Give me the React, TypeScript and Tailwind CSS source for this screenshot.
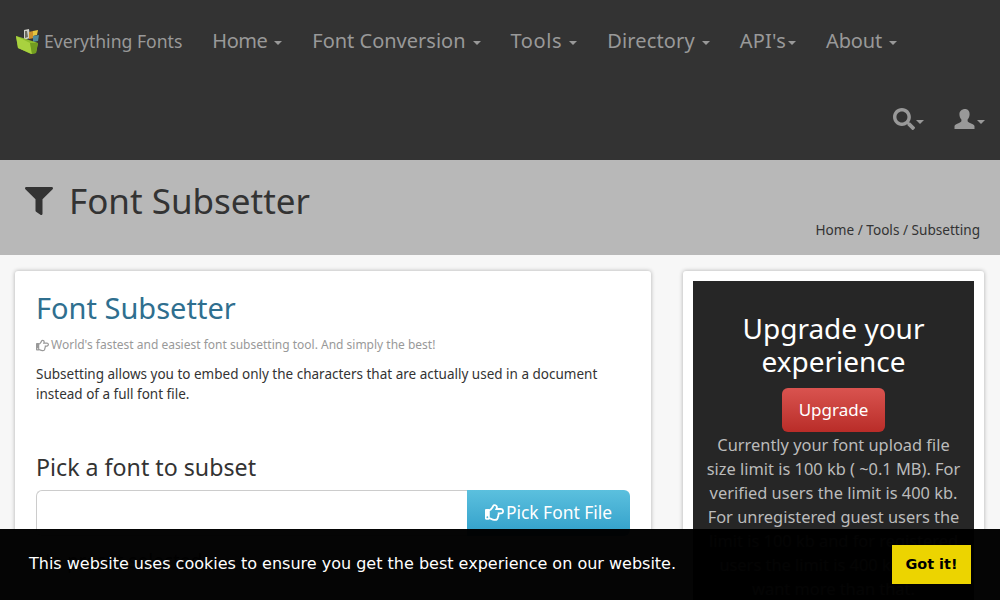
import { FaFilter, FaRegHandPointRight, FaSearch } from 'react-icons/fa'

const sans = "font-['Noto_Sans','Open_Sans',sans-serif]"

const navItems = [
  { label: 'Home', tracking: 'tracking-[-0.5px]' },
  { label: 'Font Conversion', tracking: '' },
  { label: 'Tools', tracking: 'tracking-[0.6px]' },
  { label: 'Directory', tracking: 'tracking-[0.15px]' },
  { label: "API's", tracking: 'tracking-[0.2px]' },
  { label: 'About', tracking: 'tracking-[-0.1px]' },
]

function Caret({ className = '' }: { className?: string }) {
  return (
    <span
      className={`inline-block h-0 w-0 border-x-4 border-t-4 border-x-transparent border-t-[#999] align-middle ${className}`}
    />
  )
}

function Logo() {
  return (
    <svg width="25" height="26" viewBox="0 0 25 26" className="shrink-0">
      <path d="M9 2l5-1 1 9-6 2z" fill="#cfcfc8" />
      <path d="M10 3l2 0 1 6-3 1z" fill="#6b6b60" />
      <path d="M14 4l4-1 1 7-5 1z" fill="#c98f2b" />
      <path d="M18 3l5-1-1 5-4 1z" fill="#e3c53f" />
      <path d="M18 8l6-1-1 6-5 1z" fill="#4f8a9c" />
      <path d="M1 8l7 2 15 5-2 10-5 1L3 20z" fill="#8fbd2d" />
      <path d="M1 8l14 7 2 11-14-6z" fill="#a9d23f" />
      <path d="M17 26l-2-11 8 0-2 10z" fill="#729d20" />
    </svg>
  )
}

function UserIcon() {
  return (
    <svg width="22" height="22" viewBox="0 0 22 22" fill="#999">
      <path d="M11 1c3 0 4.600 2.200 4.600 5.200 0 2.100-.8 4-2 5.200v1.700c0 .9 1 1.300 2.400 1.900 2.500 1 4.500 1.600 4.500 3.300V21H.5v-2.700c0-1.700 2-2.300 4.500-3.300 1.400-.6 2.400-1 2.400-1.900v-1.700c-1.200-1.200-2-3.100-2-5.200C5.400 3.200 8 1 11 1z" />
    </svg>
  )
}

export default function App() {
  return (
    <div className={`relative h-[600px] w-[1000px] overflow-hidden bg-[#f7f7f7] ${sans}`}>
      <header className="h-[160px] bg-[#333] text-[#999]">
        <div className="flex h-[82px] items-center pl-[15px]">
          <Logo />
          <span className="ml-[4px] text-[17.6px]">Everything Fonts</span>
          <nav className="ml-[30px] flex gap-[30px]">
            {navItems.map((item) => (
              <span key={item.label} className={`flex items-center text-[20px] ${item.tracking}`}>
                {item.label}
                <Caret className={item.label === "API's" ? 'ml-[2px] mt-[3px]' : 'ml-[7px] mt-[3px]'} />
              </span>
            ))}
          </nav>
        </div>
        <div className="flex h-[78px] items-start justify-end pr-[15px] pt-[26px]">
          <span className="flex items-center">
            <FaSearch className="text-[22px]" />
            <Caret className="ml-[1px] mt-[5px]" />
          </span>
          <span className="ml-[30px] flex items-center">
            <UserIcon />
            <Caret className="ml-[1px] mt-[5px]" />
          </span>
        </div>
      </header>

      <div className="relative flex h-[95px] bg-[#b8b8b8] pl-[25px] pt-[19px] text-[#333]">
        <FaFilter className="mt-[8px] text-[28px]" />
        <h1 className="ml-[16px] text-[35px] leading-[44px]">Font Subsetter</h1>
        <div className="absolute bottom-[15px] right-[20px] text-[13.6px] leading-[20px]">
          Home / Tools / Subsetting
        </div>
      </div>

      <main className="flex items-start px-[15px] pt-[16px]">
        <section className="w-[636px] shrink-0 rounded-[3px] bg-white px-[21px] pt-[18px] shadow-[0_0_4px_rgba(0,0,0,0.3)]">
          <h2 className="text-[29px] leading-[38px] text-[#2f6f8f]">Font Subsetter</h2>
          <p className="mt-[9px] flex items-center gap-[2px] text-[12px] leading-[18px] text-[#999]">
            <FaRegHandPointRight className="text-[13px]" />
            World's fastest and easiest font subsetting tool. And simply the best!
          </p>
          <p className="mt-[10px] text-[13.5px] leading-[20px] text-[#333]">
            Subsetting allows you to embed only the characters that are actually used in a document
            instead of a full font file.
          </p>
          <h3 className="mt-[48px] text-[23.200px] leading-[30px] text-[#333]">Pick a font to subset</h3>
          <div className="mt-[8px] flex h-[46px]">
            <div className="flex-1 rounded-l-[6px] border border-r-0 border-[#ccc] bg-white" />
            <button
              type="button"
              className="flex w-[163px] items-center justify-center gap-[2px] rounded-r-[6px] bg-gradient-to-b from-[#5bc0de] to-[#2f9fc9] pb-[2px] text-[17.4px] text-white"
            >
              <FaRegHandPointRight className="text-[19px]" />
              Pick Font File
            </button>
          </div>
          <p className="mt-[12px] text-[19px] leading-[26px] text-[#333]">No preset selected</p>
        </section>

        <aside className="ml-[32px] w-[301px] shrink-0 rounded-[3px] bg-white p-[10px] shadow-[0_0_4px_rgba(0,0,0,0.3)]">
          <div className="bg-[#262626] px-[10px] pt-[31px] text-center">
            <h3 className="text-[28px] leading-[33px] text-white">Upgrade your experience</h3>
            <button
              type="button"
              className="mt-[10px] h-[44px] w-[103px] rounded-[6px] bg-gradient-to-b from-[#d9534f] to-[#b92c28] pb-[1px] text-[17px] text-white"
            >
              Upgrade
            </button>
            <p className="mt-[1px] text-[16.4px] leading-[24px] text-[#bbb]">
              Currently your font upload file size limit is 100 kb ( ~0.1 MB). For verified users the
              limit is 400 kb. For unregistered guest users the limit is 100 kb and for registered
              users the limit is 400 kb if you want more than that.
            </p>
          </div>
        </aside>
      </main>

      <div className="absolute inset-x-0 bottom-0 flex h-[71px] items-center justify-between bg-[rgba(0,0,0,0.98)] px-[29px] pb-[2px] font-['DejaVu_Sans',sans-serif]">
        <span className="text-[16px] text-white">
          This website uses cookies to ensure you get the best experience on our website.
        </span>
        <button
          type="button"
          className="mt-[2px] h-[39px] w-[79px] bg-[#ecd400] text-[14.4px] font-bold text-black"
        >
          Got it!
        </button>
      </div>
    </div>
  )
}
